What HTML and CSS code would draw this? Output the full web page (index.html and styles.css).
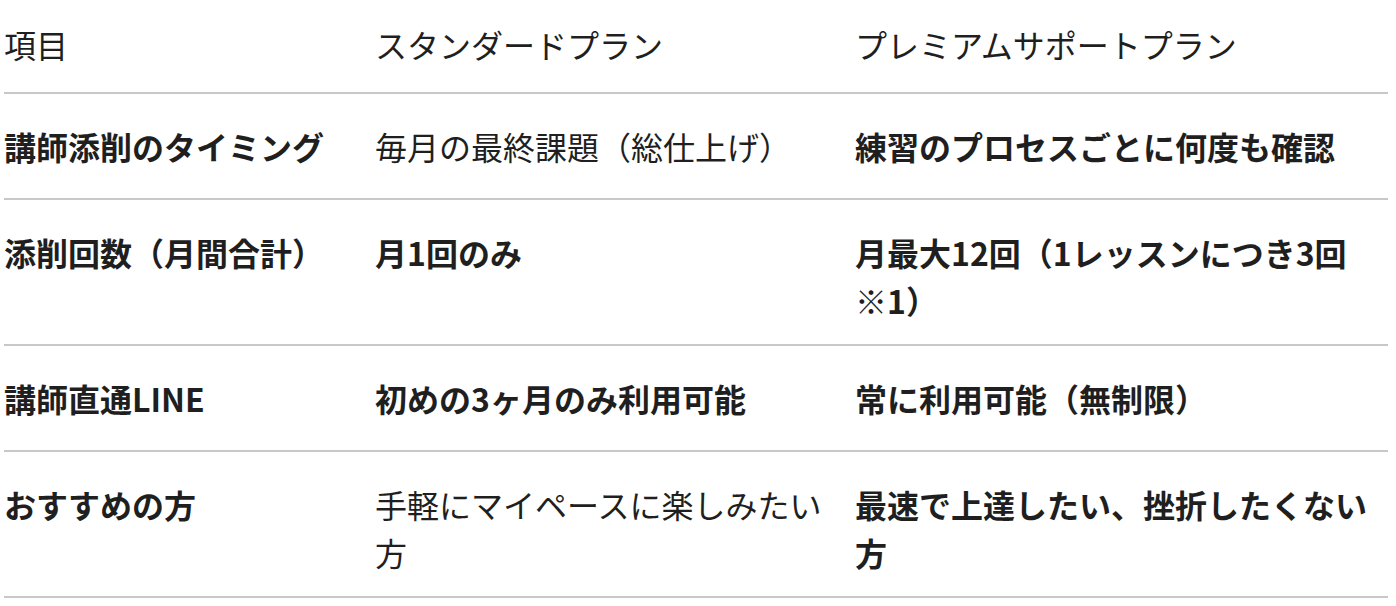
FILE: index.html
```html
<!DOCTYPE html>
<html lang="ja">
<head>
<meta charset="utf-8">
<title>プラン比較</title>
<link rel="stylesheet" href="styles.css">
</head>
<body>
<table class="compare">
  <colgroup>
    <col class="c-item">
    <col class="c-std">
    <col class="c-pre">
  </colgroup>
  <thead>
    <tr>
      <th>項目</th>
      <th>スタンダードプラン</th>
      <th>プレミアムサポートプラン</th>
    </tr>
  </thead>
  <tbody>
    <tr>
      <td class="label">講師添削のタイミング</td>
      <td>毎月の最終課題（総仕上げ）</td>
      <td class="strong">練習のプロセスごとに何度も確認</td>
    </tr>
    <tr>
      <td class="label">添削回数（月間合計）</td>
      <td class="strong">月1回のみ</td>
      <td class="strong">月最大12回（1レッスンにつき3回※1）</td>
    </tr>
    <tr>
      <td class="label">講師直通LINE</td>
      <td class="strong">初めの3ヶ月のみ利用可能</td>
      <td class="strong">常に利用可能（無制限）</td>
    </tr>
    <tr>
      <td class="label">おすすめの方</td>
      <td>手軽にマイペースに楽しみたい方</td>
      <td class="strong">最速で上達したい、挫折したくない方</td>
    </tr>
  </tbody>
</table>
</body>
</html>
```

FILE: styles.css
```css
html, body {
  margin: 0;
  padding: 0;
  background: #ffffff;
}

body {
  font-family: "Noto Sans CJK JP", "Noto Sans", sans-serif;
  color: #1f1f1f;
}

.compare {
  margin: 0 0 0 4px;
  width: 1384px;
  border-collapse: collapse;
  table-layout: fixed;
  font-size: 32px;
  line-height: 48px;
}

.c-item { width: 371px; }
.c-std { width: 480px; }
.c-pre { width: 533px; }

.compare th,
.compare td {
  text-align: left;
  vertical-align: top;
  padding: 28px 8px 20px 0;
  border-bottom: 2px solid #c8c8c8;
}

.compare th {
  font-weight: 400;
  padding-top: 20px;
  padding-bottom: 24px;
}

.compare tbody tr {
  height: 106px;
}

.compare td {
  font-weight: 400;
}

.compare td.label,
.compare td.strong {
  font-weight: 700;
}
```
